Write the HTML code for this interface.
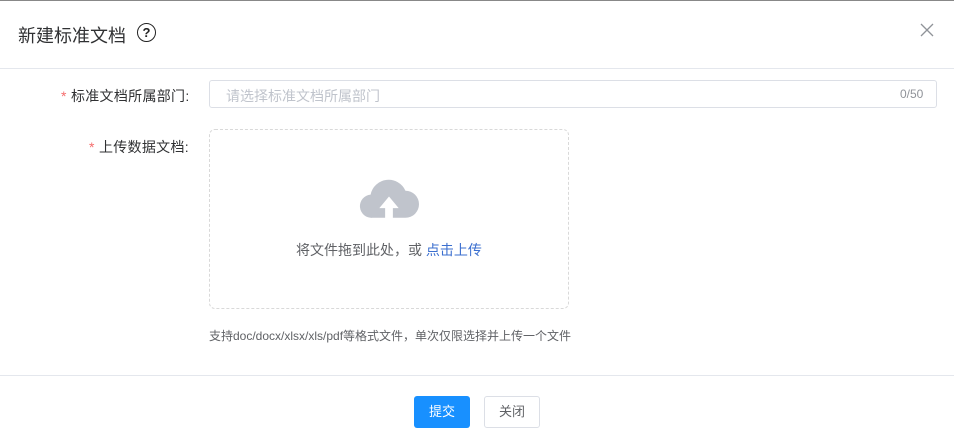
<!DOCTYPE html><html><head><meta charset="utf-8"><style>
body{margin:0;width:954px;height:447px;background:#fff;font-family:"Liberation Sans","Noto Sans CJK SC",sans-serif;position:relative;overflow:hidden;border-top:1px solid #888;box-sizing:border-box}
.a{position:absolute}
</style></head><body>
<div class="a" style="left:18px;top:21px;font-size:18px;color:#303133">新建标准文档</div>
<div class="a" style="left:137px;top:22px;width:17px;height:17px;border:1.5px solid #222;border-radius:50%;font-size:13px;font-weight:bold;text-align:center;line-height:17px;color:#222">?</div>
<svg class="a" style="left:920px;top:22px" width="14" height="14"><path d="M1 1L13 13M13 1L1 13" stroke="#909399" stroke-width="1.3"/></svg>
<div class="a" style="left:0;top:67px;width:954px;height:1px;background:#e4e7ed"></div>
<div class="a" style="left:61px;top:85px;font-size:14px;color:#303133;letter-spacing:0.3px"><span style="color:#f56c6c">*</span> 标准文档所属部门:</div>
<div class="a" style="left:209px;top:79px;width:726px;height:26px;border:1px solid #dcdfe6;border-radius:3px"></div>
<div class="a" style="left:226px;top:85px;font-size:14px;color:#c0c4cc">请选择标准文档所属部门</div>
<div class="a" style="left:900px;top:86px;font-size:12px;color:#909399">0/50</div>
<div class="a" style="left:89px;top:136px;font-size:14px;color:#303133;letter-spacing:0.3px"><span style="color:#f56c6c">*</span> 上传数据文档:</div>
<div class="a" style="left:209px;top:128px;width:358px;height:178px;border:1px dashed #d9d9d9;border-radius:6px"></div>
<svg class="a" style="left:359px;top:172px" width="60" height="47" viewBox="0 0 62 48"><path d="M14 46 A12 12 0 0 1 12 22 A19 19 0 0 1 48 18 A14 14 0 0 1 48 46 Z" fill="#c0c4cc"/><path d="M31 24 L21 36 H27 V48 H35 V36 H41 Z" fill="#fff"/></svg>
<div class="a" style="left:296px;top:239px;font-size:14px;color:#606266">将文件拖到此处，或 <span style="color:#3b6fcf">点击上传</span></div>
<div class="a" style="left:209px;top:326px;font-size:12px;color:#606266">支持doc/docx/xlsx/xls/pdf等格式文件，单次仅限选择并上传一个文件</div>
<div class="a" style="left:0;top:374px;width:954px;height:1px;background:#e4e7ed"></div>
<div class="a" style="left:414px;top:395px;width:56px;height:32px;background:#1890ff;border-radius:3px;color:#fff;font-size:13px;text-align:center;line-height:32px">提交</div>
<div class="a" style="left:484px;top:395px;width:54px;height:30px;border:1px solid #dcdfe6;border-radius:3px;color:#606266;font-size:13px;text-align:center;line-height:30px">关闭</div>
</body></html>
